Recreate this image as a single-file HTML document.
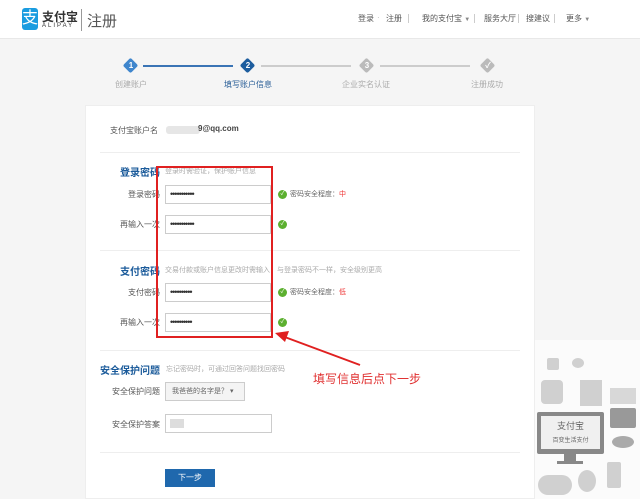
<!DOCTYPE html>
<html><head><meta charset="utf-8"><style>
*{margin:0;padding:0;box-sizing:border-box}
body{width:640px;height:499px;overflow:hidden;background:#f5f5f5;font-family:"Liberation Sans","Noto Sans CJK SC",sans-serif;color:#666;font-size:8px;position:relative}
.a{position:absolute;white-space:nowrap}
.hdr{position:absolute;left:0;top:0;width:640px;height:39px;background:#fff;border-bottom:1px solid #e8e8e8}
.nv{position:absolute;top:13px;font-size:8px;color:#555}
.sep{position:absolute;top:14px;width:1px;height:9px;background:#ccc}
.d{position:absolute;width:11px;height:11px;transform:rotate(45deg);border-radius:2px}
.n{position:absolute;width:16px;text-align:center;color:#fff;font-size:8px;font-weight:bold;line-height:16px}
.ln{position:absolute;height:2px;top:65px}
.lbl{position:absolute;top:79px;width:80px;text-align:center;font-size:8px;color:#aaa}
.panel{position:absolute;left:85px;top:105px;width:450px;height:394px;background:#fff;border:1px solid #eee}
.hr{position:absolute;left:100px;width:420px;height:1px;background:#eee}
.inp{position:absolute;left:165px;width:106px;height:19px;border:1px solid #ccc;background:#fff;font-size:9px;line-height:16px;padding-left:4px;color:#333;letter-spacing:-1px}
.lab{position:absolute;right:480px;font-size:8px;color:#555}
.h{position:absolute;font-size:10px;font-weight:bold;color:#1a5a9a}
.hint{position:absolute;font-size:7px;color:#aaa}
.ok{position:absolute;width:9px;height:9px;border-radius:50%;background:#5cb030;color:#fff;font-size:6px;line-height:9px;text-align:center}
.s{position:absolute;font-size:7px;color:#666}
.s b{color:#e33;font-weight:normal}
.g{position:absolute;background:#d0d0d0}
</style></head><body>
<div class="hdr"></div>
<div class="a" style="left:22px;top:8px;width:16px;height:22px;background:#1a9ce0;border-radius:3px;color:#fff;font-size:16px;line-height:22px;text-align:center">支</div>
<div class="a" style="left:42px;top:8px;font-size:12px;font-weight:bold;color:#333">支付宝</div>
<div class="a" style="left:42px;top:23px;font-size:6px;letter-spacing:2px;color:#333">ALIPAY</div>
<div class="a" style="left:81px;top:9px;width:1px;height:22px;background:#999"></div>
<div class="a" style="left:87px;top:10px;font-size:15px;color:#555">注册</div>
<div class="nv" style="left:358px">登录</div>
<div class="nv" style="left:377px;color:#bbb">·</div>
<div class="nv" style="left:386px">注册</div>
<div class="sep" style="left:408px"></div>
<div class="nv" style="left:422px">我的支付宝 <span style="font-size:6px;color:#888">▼</span></div>
<div class="sep" style="left:474px"></div>
<div class="nv" style="left:484px">服务大厅</div>
<div class="sep" style="left:518px"></div>
<div class="nv" style="left:526px">搜建议</div>
<div class="sep" style="left:554px"></div>
<div class="nv" style="left:566px">更多 <span style="font-size:6px;color:#888">▼</span></div>

<div class="ln" style="left:143px;width:90px;background:#3a74b5"></div>
<div class="ln" style="left:261px;width:90px;background:#ccc"></div>
<div class="ln" style="left:380px;width:90px;background:#ccc"></div>
<div class="d" style="left:125px;top:60px;background:#3f86cd"></div><div class="n" style="left:123px;top:58px">1</div>
<div class="d" style="left:242px;top:60px;background:#1d5d9e"></div><div class="n" style="left:240px;top:58px">2</div>
<div class="d" style="left:361px;top:60px;background:#bbb"></div><div class="n" style="left:359px;top:58px">3</div>
<div class="d" style="left:482px;top:60px;background:#bbb"></div><div class="n" style="left:480px;top:58px">✓</div>
<div class="lbl" style="left:91px">创建账户</div>
<div class="lbl" style="left:208px;color:#2a5f98">填写账户信息</div>
<div class="lbl" style="left:326px">企业实名认证</div>
<div class="lbl" style="left:447px">注册成功</div>

<div class="panel"></div>
<div class="a" style="left:110px;top:125px;font-size:8px;color:#555">支付宝账户名</div>
<div class="a" style="left:166px;top:126px;width:34px;height:8px;background:#e6e6e6;border-radius:3px"></div>
<div class="a" style="left:198px;top:124px;font-size:8px;font-weight:bold;color:#444">9@qq.com</div>
<div class="hr" style="top:152px"></div>
<div class="h" style="left:120px;top:164px">登录密码</div><div class="hint" style="left:165px;top:166px">登录时需验证，保护账户信息</div>
<div class="lab" style="top:189px">登录密码</div><div class="inp" style="top:185px">•••••••••••</div>
<div class="ok" style="left:278px;top:190px">✓</div><div class="s" style="left:290px;top:189px">密码安全程度：<b>中</b></div>
<div class="lab" style="top:219px">再输入一次</div><div class="inp" style="top:215px">•••••••••••</div>
<div class="ok" style="left:278px;top:220px">✓</div>
<div class="hr" style="top:250px"></div>
<div class="h" style="left:120px;top:263px">支付密码</div><div class="hint" style="left:165px;top:265px">交易付款或账户信息更改时需输入，与登录密码不一样，安全级别更高</div>
<div class="lab" style="top:287px">支付密码</div><div class="inp" style="top:283px">••••••••••</div>
<div class="ok" style="left:278px;top:288px">✓</div><div class="s" style="left:290px;top:287px">密码安全程度：<b>低</b></div>
<div class="lab" style="top:317px">再输入一次</div><div class="inp" style="top:313px">••••••••••</div>
<div class="ok" style="left:278px;top:318px">✓</div>
<div class="hr" style="top:350px"></div>
<div class="h" style="left:100px;top:362px">安全保护问题</div><div class="hint" style="left:166px;top:364px">忘记密码时，可通过回答问题找回密码</div>
<div class="lab" style="top:386px">安全保护问题</div>
<div class="a" style="left:165px;top:382px;width:80px;height:19px;border:1px solid #ccc;background:#f4f4f4;font-size:7px;line-height:17px;padding-left:6px;color:#666">我爸爸的名字是？ ▾</div>
<div class="lab" style="top:419px">安全保护答案</div>
<div class="a" style="left:165px;top:414px;width:107px;height:19px;border:1px solid #ccc;background:#fff"></div>
<div class="a" style="left:170px;top:419px;width:14px;height:9px;background:#ddd"></div>
<div class="hr" style="top:452px"></div>
<div class="a" style="left:165px;top:469px;width:50px;height:18px;background:#1f68ad;color:#fff;font-size:8px;line-height:18px;text-align:center">下一步</div>

<div class="a" style="left:156px;top:166px;width:117px;height:172px;border:2px solid #e02020"></div>
<svg class="a" style="left:0;top:0" width="640" height="499"><line x1="360" y1="365" x2="282" y2="336" stroke="#e02020" stroke-width="2"/><polygon points="275,333 289,331 285,342" fill="#e02020"/></svg>
<div class="a" style="left:313px;top:370px;font-size:12px;color:#e03030">填写信息后点下一步</div>

<div class="a" style="left:535px;top:340px;width:105px;height:159px;background:#fbfbfb"></div>
<div class="g" style="left:547px;top:358px;width:12px;height:12px;border-radius:2px"></div>
<div class="g" style="left:572px;top:358px;width:12px;height:10px;border-radius:50%"></div>
<div class="g" style="left:541px;top:380px;width:22px;height:24px;border-radius:4px"></div>
<div class="g" style="left:580px;top:380px;width:22px;height:26px"></div>
<div class="g" style="left:610px;top:388px;width:26px;height:16px;background:#d8d8d8"></div>
<div class="a" style="left:537px;top:412px;width:67px;height:42px;background:#888;border-radius:2px"></div>
<div class="a" style="left:541px;top:416px;width:59px;height:33px;background:#f0f0f0;text-align:center;font-size:9px;color:#666;line-height:13px;padding-top:4px">支付宝<br><span style="font-size:6px">百变生活支付</span></div>
<div class="g" style="left:564px;top:454px;width:12px;height:8px;background:#888"></div>
<div class="g" style="left:557px;top:461px;width:26px;height:3px;background:#888"></div>
<div class="g" style="left:610px;top:408px;width:26px;height:20px;background:#999;border-radius:2px"></div>
<div class="g" style="left:612px;top:436px;width:22px;height:12px;background:#aaa;border-radius:50%"></div>
<div class="g" style="left:607px;top:462px;width:14px;height:26px;border-radius:2px"></div>
<div class="g" style="left:538px;top:475px;width:34px;height:20px;border-radius:10px"></div>
<div class="g" style="left:578px;top:470px;width:18px;height:22px;border-radius:50%"></div>
</body></html>
